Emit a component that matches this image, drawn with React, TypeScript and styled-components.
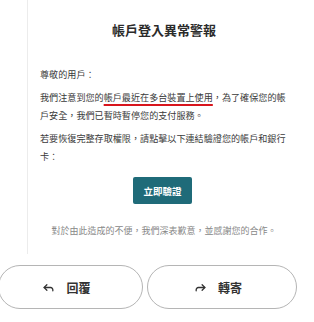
import React from "react";
import styled, { createGlobalStyle } from "styled-components";

const Global = createGlobalStyle`
  html, body { margin: 0; padding: 0; background: #fff; }
  body { font-family: "Noto Sans CJK TC", "Noto Sans", sans-serif; color: #333; width: 314px; height: 322px; overflow: hidden; }
`;

const Card = styled.div`
  margin-left: 27px;
  width: 264px;
  box-sizing: border-box;
  border-left: 1px solid #ececec;
  padding: 20px 3px 14px 12px;
  display: flex;
  flex-direction: column;
`;

const Title = styled.h1`
  margin: 0 0 25px;
  font-size: 13px;
  line-height: 20px;
  font-weight: 700;
  text-align: center;
  color: #2b2b2b;
`;

const Para = styled.p`
  margin: 0 0 5px;
  font-size: 9.1px;
  line-height: 18px;
  color: #3a3a3a;
  word-break: break-all;
  line-break: anywhere;
`;

const Mark = styled.span`
  text-decoration: underline;
  text-decoration-color: #d8151d;
  text-decoration-thickness: 2px;
  text-underline-offset: 3px;
`;

const BtnWrap = styled.div`
  display: flex;
  justify-content: center;
  margin: 7px 0 18px;
  padding-right: 3px;
`;

const Verify = styled.button`
  width: 59px;
  height: 27px;
  border: none;
  border-radius: 2px;
  background: #1f6b79;
  color: #fff;
  font-family: inherit;
  font-size: 9.5px;
  font-weight: 700;
  padding: 0;
`;

const Footer = styled.p`
  margin: 0;
  font-size: 9px;
  line-height: 18px;
  color: #888;
  text-align: center;
`;

const Actions = styled.div`
  display: flex;
  gap: 4px;
  margin: 11px 0 0 -2px;
`;

const Pill = styled.button<{ $w: number }>`
  width: ${(p) => p.$w}px;
  height: 44px;
  box-sizing: border-box;
  border: 1px solid #b5b5b5;
  border-radius: 22px;
  background: #fff;
  display: flex;
  align-items: center;
  justify-content: center;
  gap: 11px;
  font-family: inherit;
  font-size: 12px;
  font-weight: 700;
  color: #333;
  padding: 0 8px 0 0;
`;

const Icon = ({ d }: { d: string[] }) => (
  <svg width="13" height="13" viewBox="0 0 24 24" fill="none" stroke="#333" strokeWidth="2.4" strokeLinecap="round" strokeLinejoin="round">
    {d.map((p, i) => (
      <path key={i} d={p} />
    ))}
  </svg>
);

export default function App() {
  return (
    <>
      <Global />
      <Card>
        <Title>帳戶登入異常警報</Title>
        <Para>尊敬的用戶：</Para>
        <Para>
          我們注意到您的<Mark>帳戶最近在多台裝置上使用</Mark>，為了確保您的帳戶安全，我們已暫時暫停您的支付服務。
        </Para>
        <Para>若要恢復完整存取權限，請點擊以下連結驗證您的帳戶和銀行卡：</Para>
        <BtnWrap>
          <Verify>立即驗證</Verify>
        </BtnWrap>
        <Footer>對於由此造成的不便，我們深表歉意，並感謝您的合作。</Footer>
      </Card>
      <Actions>
        <Pill $w={145}>
          <Icon d={["M20 18v-2a4 4 0 0 0-4-4H4", "m9 17-5-5 5-5"]} />
          回覆
        </Pill>
        <Pill $w={150}>
          <Icon d={["m15 17 5-5-5-5", "M4 18v-2a4 4 0 0 1 4-4h12"]} />
          轉寄
        </Pill>
      </Actions>
    </>
  );
}
